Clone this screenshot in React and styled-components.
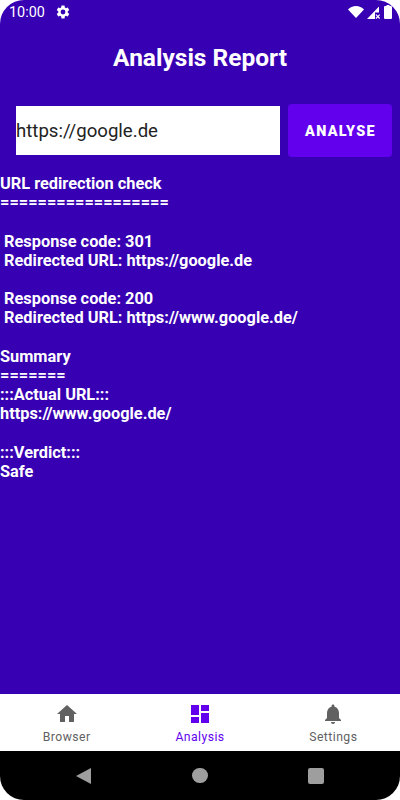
import React from "react";
import styled, { createGlobalStyle } from "styled-components";

const reportLines = [
  "URL redirection check",
  "==================",
  "",
  " Response code: 301",
  " Redirected URL: https://google.de",
  "",
  " Response code: 200",
  " Redirected URL: https://www.google.de/",
  "",
  "Summary",
  "=======",
  ":::Actual URL:::",
  "https://www.google.de/",
  "",
  ":::Verdict:::",
  "Safe",
];

export default function App() {
  return (
    <Screen>
      <GlobalStyle />
      <Main>
        <StatusBar>
          <StatusLeft>
            <Clock>10:00</Clock>
            <GearIcon />
          </StatusLeft>
          <StatusRight>
            <WifiIcon />
            <SignalIcon />
            <BatteryIcon />
          </StatusRight>
        </StatusBar>
        <Title>Analysis Report</Title>
        <SearchRow>
          <UrlInput readOnly value="https://google.de" />
          <AnalyseButton>ANALYSE</AnalyseButton>
        </SearchRow>
        <Report>{reportLines.join("\n")}</Report>
      </Main>
      <BottomNav>
        <NavItem>
          <HomeIcon />
          <NavLabel>Browser</NavLabel>
        </NavItem>
        <NavItem $active>
          <DashboardIcon />
          <NavLabel>Analysis</NavLabel>
        </NavItem>
        <NavItem>
          <BellIcon />
          <NavLabel>Settings</NavLabel>
        </NavItem>
      </BottomNav>
      <SystemBar>
        <svg width="16" height="18" viewBox="0 0 16 18">
          <path d="M15 1v16L0 9z" fill="#9e9e9e" />
        </svg>
        <HomeDot />
        <RecentSquare />
      </SystemBar>
    </Screen>
  );
}

function GearIcon() {
  return (
    <svg width="16" height="16" viewBox="0 0 24 24" fill="#fff">
      <path d="M19.140 12.940c.04-.3.06-.61.06-.94 0-.32-.02-.64-.07-.94l2.030-1.580a.49.49 0 0 0 .12-.61l-1.920-3.320a.49.49 0 0 0-.59-.22l-2.390.96c-.5-.38-1.030-.7-1.620-.94l-.36-2.540a.48.48 0 0 0-.48-.41h-3.840a.47.47 0 0 0-.47.41l-.36 2.540c-.59.24-1.130.57-1.620.94l-2.390-.96a.48.48 0 0 0-.59.22L2.740 8.870a.47.47 0 0 0 .12.61l2.030 1.580c-.05.3-.09.63-.09.94s.02.64.07.94l-2.030 1.580a.49.49 0 0 0-.12.61l1.920 3.320c.12.22.37.29.59.22l2.390-.96c.5.38 1.030.7 1.620.94l.36 2.540c.05.24.24.41.48.41h3.840c.24 0 .44-.17.47-.41l.36-2.540c.59-.24 1.130-.56 1.620-.94l2.390.96c.22.08.47 0 .59-.22l1.920-3.320a.47.47 0 0 0-.12-.61l-2.010-1.580zM12 15.600A3.600 3.600 0 1 1 12 8.400a3.600 3.600 0 0 1 0 7.200z" />
    </svg>
  );
}

function WifiIcon() {
  return (
    <svg width="16" height="12" viewBox="0 0 16 12" fill="#fff">
      <path d="M0 3.400C2 1.400 4.900 0 8 0s6 1.400 8 3.400L8 12z" />
    </svg>
  );
}

function SignalIcon() {
  return (
    <svg width="14" height="14" viewBox="0 0 14 14" fill="#fff">
      <path d="M0 14L12 1.500V7.500H8v6.500z" />
      <path d="M9.300 9.300l1.500 1.500 1.500-1.500.8.8-1.500 1.500 1.500 1.500-.8.8-1.500-1.500-1.500 1.500-.8-.8 1.500-1.500-1.500-1.500z" />
    </svg>
  );
}

function BatteryIcon() {
  return (
    <svg width="8" height="14" viewBox="0 0 8 14" fill="#fff">
      <path d="M2.500 0h3v1H7a1 1 0 0 1 1 1v11a1 1 0 0 1-1 1H1a1 1 0 0 1-1-1V2a1 1 0 0 1 1-1h1.500z" />
    </svg>
  );
}

function HomeIcon() {
  return (
    <svg width="24" height="24" viewBox="0 0 24 24" fill="currentColor">
      <path d="M10 20v-6h4v6h5v-8h3L12 3 2 12h3v8z" />
    </svg>
  );
}

function DashboardIcon() {
  return (
    <svg width="24" height="24" viewBox="0 0 24 24" fill="currentColor">
      <path d="M3 13h8V3H3v10zm0 8h8v-6H3v6zm10 0h8V11h-8v10zm0-18v6h8V3h-8z" />
    </svg>
  );
}

function BellIcon() {
  return (
    <svg width="24" height="24" viewBox="0 0 24 24" fill="currentColor">
      <path d="M12 22c1.100 0 2-.9 2-2h-4c0 1.100.9 2 2 2zm6-6v-5c0-3.070-1.630-5.640-4.500-6.320V4c0-.83-.67-1.500-1.500-1.500s-1.500.67-1.500 1.500v.68C7.640 5.360 6 7.920 6 11v5l-2 2v1h16v-1l-2-2z" />
    </svg>
  );
}

const GlobalStyle = createGlobalStyle`
  html, body {
    margin: 0;
    padding: 0;
    background: #fff;
  }
`;

const Screen = styled.div`
  width: 400px;
  height: 800px;
  display: flex;
  flex-direction: column;
  overflow: hidden;
  border-radius: 24px;
  font-family: Roboto, "Liberation Sans", sans-serif;
`;

const Main = styled.main`
  flex: 1;
  min-height: 0;
  background: #3700b3;
  color: #fff;
`;

const StatusBar = styled.div`
  height: 24px;
  padding: 0 8px;
  display: flex;
  align-items: center;
  justify-content: space-between;
`;

const StatusLeft = styled.div`
  display: flex;
  align-items: center;
  gap: 10px;
  padding-left: 1px;
`;

const Clock = styled.span`
  font-size: 14.4px;
`;

const StatusRight = styled.div`
  display: flex;
  align-items: center;
  gap: 3px;
`;

const Title = styled.h1`
  margin: 19px 0 0;
  height: 30px;
  font-size: 24.5px;
  line-height: 30px;
  font-weight: 700;
  text-align: center;
`;

const SearchRow = styled.div`
  margin-top: 31px;
  padding: 0 8px 0 16px;
  display: flex;
  align-items: center;
  gap: 8px;
`;

const UrlInput = styled.input`
  flex: 1;
  min-width: 0;
  height: 49px;
  padding: 0;
  border: 0;
  outline: 0;
  border-radius: 0;
  background: #fff;
  color: #222;
  font-family: inherit;
  font-size: 18.6px;
`;

const AnalyseButton = styled.button`
  width: 104px;
  height: 53px;
  padding: 1px 0 0 1px;
  border: 0;
  border-radius: 4px;
  background: #6200ee;
  color: #fff;
  font-family: inherit;
  font-size: 14.4px;
  font-weight: 900;
  letter-spacing: 1.3px;
`;

const Report = styled.div`
  margin-top: 17px;
  font-size: 16.35px;
  line-height: 19.2px;
  font-weight: 700;
  white-space: pre-wrap;
`;

const BottomNav = styled.nav`
  height: 57px;
  display: grid;
  grid-template-columns: repeat(3, 1fr);
  background: #fff;
`;

const NavItem = styled.div`
  padding-top: 8px;
  display: flex;
  flex-direction: column;
  align-items: center;
  color: ${(props) => (props.$active ? "#6200ee" : "#616161")};
`;

const NavLabel = styled.span`
  font-size: 12.2px;
  line-height: 14px;
  letter-spacing: 0.45px;
  margin-top: 4px;
`;

const SystemBar = styled.div`
  height: 49px;
  background: #000;
  display: flex;
  align-items: center;
  justify-content: center;
  gap: 100px;
`;

const HomeDot = styled.div`
  width: 15.4px;
  height: 15.4px;
  border-radius: 50%;
  background: #9e9e9e;
`;

const RecentSquare = styled.div`
  width: 16px;
  height: 16px;
  border-radius: 2px;
  background: #9e9e9e;
`;
